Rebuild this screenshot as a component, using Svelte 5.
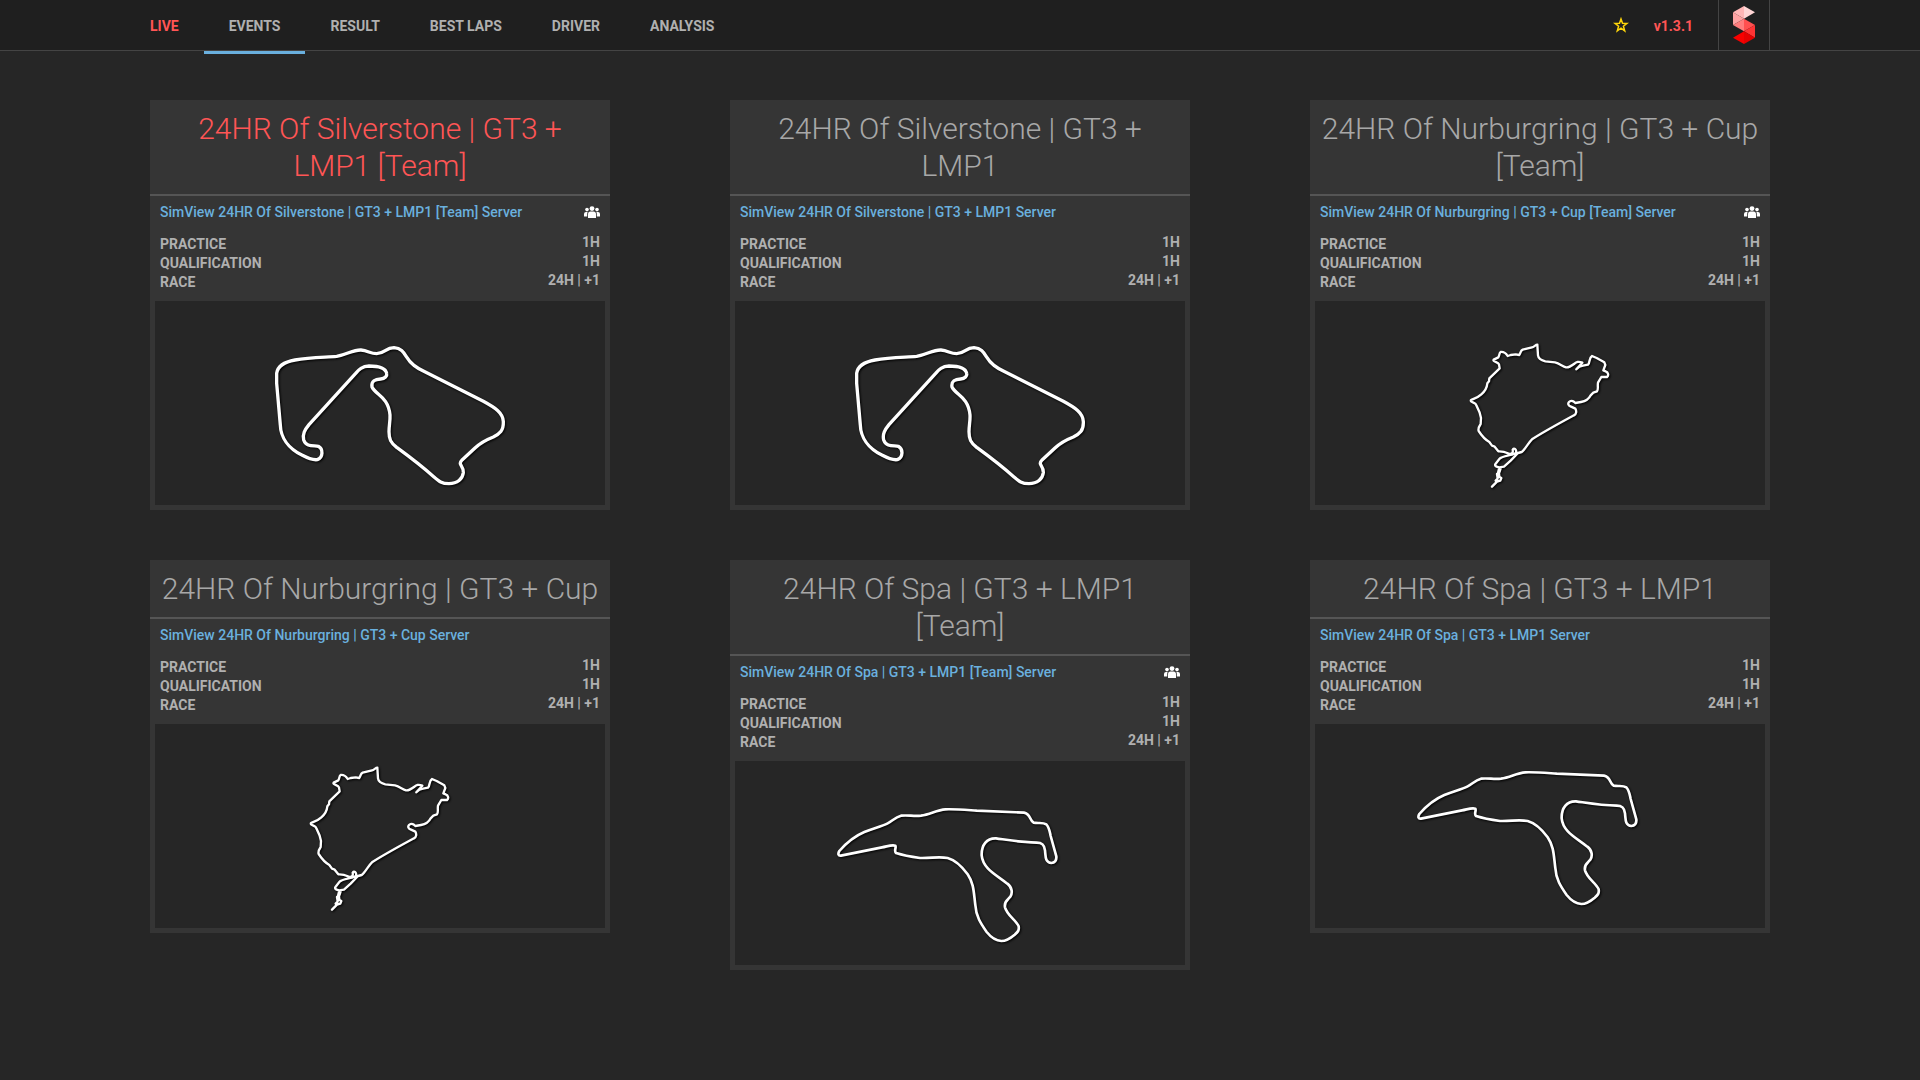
<script>
  const tabs = ['LIVE', 'EVENTS', 'RESULT', 'BEST LAPS', 'DRIVER', 'ANALYSIS'];

  // Circuit outlines, drawn three units to the pixel.
  const tracks = {
    silverstone: {
      box: '-315 -87 1350 612',
      width: 10,
      path: 'M50 130C53 108 72 96 105 90C150 82 195 82 230 79C262 74 278 59 303 60C325 62 330 71 350 71C376 70 376 53 402 53C438 56 432 84 462 106C472 114 480 118 490 123L670 214C705 233 729 248 730 275C731 302 719 312 700 321C672 332 660 340 645 354L607 389C591 406 611 404 610 428C608 447 592 461 567 461C545 461 537 454 522 441C480 403 447 379 410 352C392 338 387 328 387 305C387 285 391 274 390 255C385 200 347 195 336 171C333 152 346 148 362 147C375 146 382 138 380 130C376 111 349 108 327 108C306 109 297 118 287 130L147 284C134 300 127 312 131 330C139 352 161 346 175 349C190 357 190 382 172 389C156 391 142 384 127 376C84 355 62 321 61 285L50 160Z',
    },
    nurburgring: {
      box: '-405 -87 1350 612',
      width: 7,
      path: 'M262 44C258 43 252 51 246 52L218 59C211 62 213 67 208 75L197 73L182 75L173 78C168 70 161 65 152 66C147 69 149 76 145 82L131 89C127 95 144 95 147 103L149 115L118 145L117 154L112 160C111 172 107 182 94 193C82 204 72 206 63 210C60 217 71 216 77 222C86 239 90 245 93 264L92 282C88 288 84 297 86 303C95 317 106 329 118 336L126 347L134 350L145 364C160 363 168 367 177 371C186 373 190 367 188 359C192 351 201 359 198 369L186 374C170 378 154 380 148 387L137 401C132 408 140 411 148 412L162 410L182 392L204 369L215 366C226 358 235 338 246 328C285 303 330 279 372 256C380 252 380 243 376 236L363 230C356 227 352 222 357 216C364 208 373 216 376 219L393 216C405 214 416 209 422 196L430 188L441 184C446 177 442 170 444 158L454 141L471 141C477 136 475 127 467 124L460 121L466 105L463 97L440 84L426 78C416 84 421 97 414 104L399 107C390 108 384 112 379 118M379 118L397 98C385 93 380 96 372 102C364 108 356 113 348 112C337 109 329 100 315 97L286 94C275 91 265 86 264 76L262 44M148 412L142 437L154 444L151 452L141 455L126 470M153 412L147 430L148 439M137 452L143 446L141 432',
    },
    spa: {
      box: '-255 -78 1350 612',
      width: 8,
      path: 'M63 206C55 207 53 201 58 192C78 169 107 146 133 135C162 123 182 119 203 109C216 103 225 91 243 86C264 84 281 88 303 86C331 82 350 69 376 67C410 66 440 69 470 71L612 77C633 81 626 97 641 107C655 110 668 105 679 112C688 121 689 134 692 147L709 208C710 220 704 227 694 228C675 226 677 208 675 190C673 172 665 167 650 167C603 166 570 160 528 154C500 153 484 174 485 205C489 246 530 264 562 290C577 301 578 319 571 329C562 339 552 345 555 361C562 386 588 399 596 418C598 431 593 435 584 443C571 454 560 462 544 462C525 461 513 451 500 435C482 409 468 388 466 354C461 316 462 290 443 262C424 236 405 219 383 213C355 208 335 214 300 213C272 209 250 205 228 198C221 191 230 181 226 176C215 172 200 179 186 181Z',
    },
  };

  const sessions = [
    ['PRACTICE', '1H'],
    ['QUALIFICATION', '1H'],
    ['RACE', '24H | +1'],
  ];

  const events = [
    { name: '24HR Of Silverstone | GT3 + LMP1 [Team]', track: 'silverstone', team: true, live: true },
    { name: '24HR Of Silverstone | GT3 + LMP1', track: 'silverstone' },
    { name: '24HR Of Nurburgring | GT3 + Cup [Team]', track: 'nurburgring', team: true },
    { name: '24HR Of Nurburgring | GT3 + Cup', track: 'nurburgring' },
    { name: '24HR Of Spa | GT3 + LMP1 [Team]', track: 'spa', team: true },
    { name: '24HR Of Spa | GT3 + LMP1', track: 'spa' },
  ];
</script>

<header>
  <nav aria-label="Main">
    {#each tabs as tab}
      <a href="#{tab.toLowerCase().replace(' ', '-')}" class:live={tab === 'LIVE'} class:active={tab === 'EVENTS'}>{tab}</a>
    {/each}
  </nav>
  <div class="tools">
    <a class="star" href="#favourite" aria-label="Favourite">
      <svg viewBox="0 0 16 16" width="16" height="16">
        <path d="M8 2L9.500 6.300L14 6.400L10.400 9.200L11.700 13.800L8 11.100L4.300 13.800L5.600 9.200L2 6.400L6.500 6.300Z" fill="none" stroke="#ffd60a" stroke-width="1.5" />
      </svg>
    </a>
    <a class="version" href="#version">v1.3.1</a>
    <a class="logo" href="#home" aria-label="SimView">
      <svg viewBox="0 0 66 114" width="22" height="38">
        <path d="M33 0L66 19L33 38Z" fill="#ffd5d5" />
        <path d="M33 0V38L0 19Z" fill="#ffb5b5" />
        <path d="M0 19V57L33 38Z" fill="#ffa2a2" />
        <path d="M33 38V76L0 57Z" fill="#ff7d7d" />
        <path d="M33 38L66 57L33 76Z" fill="#ff5050" />
        <path d="M66 57V95L33 76Z" fill="#ff3434" />
        <path d="M33 76L66 95L33 114Z" fill="#e60000" />
        <path d="M33 76V114L0 95Z" fill="#f80000" />
      </svg>
    </a>
  </div>
</header>

<main>
  {#each events as event}
    <article>
      <h2 class:live={event.live}>{event.name}</h2>
      <div class="server">
        <a href="#server">SimView {event.name} Server</a>
        {#if event.team}
          <svg viewBox="0 0 16 13" width="16" height="13" role="img" aria-label="Team event">
            <g fill="#fff">
              <circle cx="8" cy="2.600" r="2.400" />
              <circle cx="3" cy="3.600" r="1.800" />
              <circle cx="13" cy="3.600" r="1.800" />
              <path d="M4 12V8.200Q4 5.500 6.500 5.500H9.500Q12 5.500 12 8.200V12Z" />
              <path d="M0 10.500V8Q0 6 2 6H3.600Q3.200 7 3.200 8.200V10.500ZM16 10.500V8Q16 6 14 6H12.400Q12.800 7 12.800 8.200V10.500Z" />
            </g>
          </svg>
        {/if}
      </div>
      <dl>
        {#each sessions as [label, length]}
          <div><dt>{label}</dt><dd>{length}</dd></div>
        {/each}
      </dl>
      <div class="track">
        <svg viewBox={tracks[event.track].box} role="img" aria-label="Track map">
          <path d={tracks[event.track].path} stroke-width={tracks[event.track].width} />
        </svg>
      </div>
    </article>
  {/each}
</main>

<style>
  :global(body) {
    background: #262626;
    color: #b0b0b0;
    font-family: Roboto, sans-serif;
    font-size: 14px;
    line-height: 19px;
  }
  a {
    color: inherit;
    text-decoration: none;
  }
  header {
    display: flex;
    justify-content: space-between;
    height: 50px;
    padding: 0 150px 0 125px;
    background: #1f1f1f;
    border-bottom: 1px solid #444;
    font-weight: 700;
    line-height: 53px;
  }
  nav,
  .tools {
    display: flex;
  }
  nav a {
    height: 51px;
    padding: 0 25px;
  }
  nav .active {
    border-bottom: 3px solid #6ab0de;
  }
  .live,
  .version {
    color: #ff5555;
  }
  .star {
    display: flex;
    align-items: center;
  }
  .version {
    padding: 0 25px;
  }
  .logo {
    display: flex;
    align-items: center;
    padding: 0 14px;
    border: solid #444;
    border-width: 0 1px;
  }
  main {
    display: grid;
    grid-template-columns: repeat(3, 1fr);
    align-items: start;
    gap: 50px 120px;
    padding: 49px 150px;
  }
  article {
    background: #353535;
    padding-bottom: 5px;
  }
  h2 {
    margin: 0;
    padding: 10px;
    border-bottom: 2px solid #555;
    font-size: 30px;
    line-height: 37px;
    font-weight: 300;
    text-align: center;
  }
  h2:not(.live) {
    color: #a8a8a8;
  }
  .server {
    display: flex;
    justify-content: space-between;
    align-items: center;
    padding: 7px 10px;
    color: #6ab0de;
    font-weight: 500;
  }
  dl {
    margin: 0;
    padding: 5px 10px 10px;
    font-weight: 700;
  }
  dl div {
    display: flex;
    justify-content: space-between;
    height: 19px;
  }
  dt {
    line-height: 21px;
  }
  dd {
    margin: 0;
    line-height: 17px;
  }
  .track {
    margin: 0 5px;
    background: #262626;
  }
  .track svg {
    display: block;
    width: 100%;
    fill: none;
    stroke: #fff;
    stroke-linejoin: round;
    stroke-linecap: round;
    filter: drop-shadow(1px 1px 1px #000);
  }
</style>
